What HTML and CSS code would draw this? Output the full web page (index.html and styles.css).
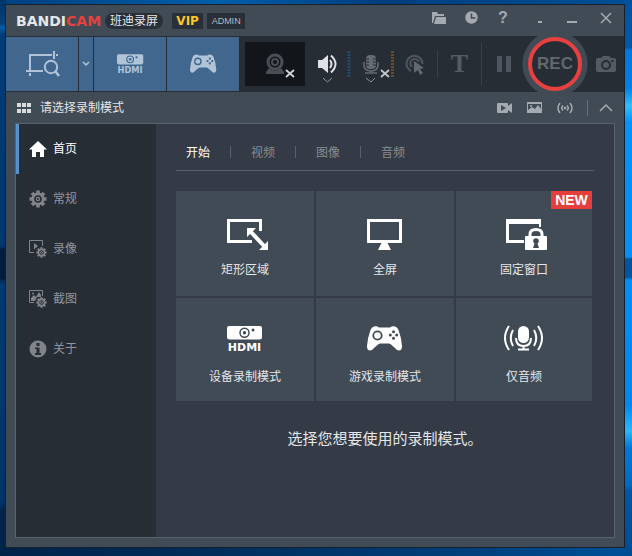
FILE: index.html
```html
<!DOCTYPE html>
<html lang="zh-CN">
<head>
<meta charset="utf-8">
<meta name="viewport" content="width=device-width, initial-scale=1">
<title>BANDICAM</title>
<link rel="stylesheet" href="styles.css">
</head>
<body>
<svg class="defs" aria-hidden="true">
  <symbol id="hdmi" viewBox="0 0 36 26">
    <path fill="currentColor" fill-rule="evenodd" d="M2 0H33Q35 0 35 2V11Q35 13.500 32.500 13.500H2.500Q0 13.500 0 11V2Q0 0 2 0Z"/>
    <circle class="hole-line" cx="17.500" cy="6.800" r="4.500" stroke-width="1.500"/>
    <circle class="hole" cx="17.500" cy="6.800" r="1.700"/>
    <circle class="hole" cx="26" cy="4" r="1.500"/>
    <text class="hdmi-text" x="17.500" y="25" text-anchor="middle">HDMI</text>
  </symbol>
  <symbol id="pad" viewBox="0 0 36 26">
    <path fill="currentColor" d="M7 .5Q10-.5 12 1.500H23Q25-.5 28 .5Q30.500 1 31.500 4Q34.500 12 35 20Q35 24.500 32 24.500Q30 24.500 28 22L24 18.500Q23 17.500 21.500 17.500H13.500Q12 17.500 11 18.500L7 22Q5 24.500 3 24.500Q0 24.500 0 20Q.5 12 3.500 4Q4.500 1 7 .5Z"/>
    <circle class="hole-line" cx="10.500" cy="9.500" r="4.200" stroke-width="1.800"/>
    <circle class="hole" cx="26.500" cy="5.800" r="1.500"/><circle class="hole" cx="26.500" cy="12.200" r="1.500"/>
    <circle class="hole" cx="23.300" cy="9" r="1.500"/><circle class="hole" cx="29.700" cy="9" r="1.500"/>
  </symbol>
  <symbol id="gear" viewBox="0 0 18 18">
    <g stroke="currentColor" stroke-width="3.600">
      <path d="M9 .5V17.500M.5 9H17.500M3 3L15 15M15 3L3 15"/>
    </g>
    <circle cx="9" cy="9" r="6.500" fill="currentColor"/>
    <circle class="hole-line" cx="9" cy="9" r="3" stroke-width="1.600"/>
    <circle class="hole" cx="9" cy="9" r="1"/>
  </symbol>
</svg>

<main class="window">
  <header class="titlebar">
    <div class="logo"><span>BANDI</span><span class="logo-red">CAM</span></div>
    <span class="pill">班迪录屏</span>
    <span class="badge vip">VIP</span>
    <span class="badge admin">ADMIN</span>
    <div class="window-tools">
      <button class="tool" aria-label="打开文件夹"><svg width="14" height="12"><path fill="currentColor" d="M0 0H5L6 2H12V4H3L1 11H0ZM4 5H14V12H2Z"/></svg></button>
      <button class="tool" aria-label="计划"><svg width="13" height="13"><circle cx="6.500" cy="6.500" r="6.200" fill="currentColor"/><path d="M6.500 2.500V7H10.500" class="hole-line" stroke-width="1.600"/></svg></button>
      <button class="tool help" aria-label="帮助">?</button>
      <span class="tool-gap"></span>
      <button class="tool" aria-label="最小化到托盘"><svg width="12" height="12"><path fill="currentColor" d="M4 9H8V11H4Z"/></svg></button>
      <button class="tool" aria-label="最小化"><svg width="12" height="12"><path fill="currentColor" d="M1 9H11V11H1Z"/></svg></button>
      <button class="tool close" aria-label="关闭"><svg width="12" height="12"><path d="M1 1L11 11M11 1L1 11" fill="none" stroke="currentColor" stroke-width="1.500"/></svg></button>
    </div>
  </header>

  <div class="toolbar">
    <div class="modes">
      <button class="mode" aria-label="矩形区域"><svg width="36" height="28" fill="none" stroke="currentColor" stroke-width="2"><path d="M5 5H28M32 5H34M6 4V20M2 21H19M6 23V26M30 1V9"/><circle cx="27" cy="17" r="6.200"/><path d="M31.500 21.500L35 26" stroke-width="2.500"/></svg></button>
      <button class="mode-more" aria-label="更多模式"><svg width="8" height="6"><path d="M1 1L4 4L7 1" fill="none" stroke="currentColor" stroke-width="1.500"/></svg></button>
      <button class="mode" aria-label="设备录制模式"><svg width="27" height="20"><use href="#hdmi"/></svg></button>
      <button class="mode" aria-label="游戏录制模式"><svg width="27" height="20"><use href="#pad"/></svg></button>
    </div>
    <button class="webcam" aria-label="摄像头"><svg width="60" height="44">
      <g fill="none" stroke="#4b4f55"><circle cx="30" cy="20" r="7" stroke-width="3"/><circle cx="30" cy="20" r="3" stroke-width="2"/></g><path fill="#4b4f55" d="M24 26Q30 31 36 26L39 30V32H21V30Z"/>
      <path d="M41 28L49 35M49 28L41 35" stroke="#d3d6d9" stroke-width="1.800"/></svg></button>
    <button class="device" aria-label="扬声器"><svg width="46" height="54">
      <path fill="#dfe2e4" d="M13 23H17L23 18V36L17 31H13Z"/><g fill="none" stroke="#dfe2e4" stroke-width="2"><path d="M25 23Q28 27 25 31"/><path d="M26 18.500Q35 27 26 35.500"/></g><path d="M18 41L22.500 45L27 41" fill="none" stroke="#8d949c"/>
      <path d="M44 14V41" stroke="#24476c" stroke-width="3" stroke-dasharray="2 1"/></svg></button>
    <button class="device" aria-label="麦克风"><svg width="46" height="54">
      <rect x="15" y="18" width="10" height="14" rx="4" fill="#666b72"/><path d="M15 22H18M15 25H18M15 28H18M22 22H25M22 25H25M22 28H25" stroke="#292f37"/><path d="M13 25V28Q13 34 20 34Q27 34 27 28V25M20 34V36M14 36H26" fill="none" stroke="#666b72" stroke-width="1.600"/><path d="M15 41L20 45L24 41" fill="none" stroke="#8d949c"/>
      <path d="M30 33L38 40M38 33L30 40" stroke="#c3c7cb" stroke-width="1.800"/>
      <path d="M41.500 14V41" stroke="#714a25" stroke-width="3" stroke-dasharray="2 1"/></svg></button>
    <button class="device" aria-label="鼠标效果"><svg width="40" height="54">
      <g fill="none" stroke="#4f555e" stroke-width="2"><path d="M14 34A8 8 0 1 1 25.500 27"/><path d="M15 30A4.500 4.500 0 1 1 22 25"/></g><path fill="#626870" d="M17 24L27 31L23 32L26 36L23 38L21 33L17 36Z"/></svg></button>
    <span class="divider"></span>
    <button class="text-tool" aria-label="文字">T</button>
    <span class="divider tall"></span>
    <button class="device pause" aria-label="暂停"><svg width="14" height="16"><path fill="currentColor" d="M0 0H5V16H0ZM9 0H14V16H9Z"/></svg></button>
    <button class="rec"><span>REC</span></button>
    <button class="device camera" aria-label="截图"><svg width="20" height="16"><path fill="currentColor" d="M2 2H5L7 0H13L15 2H18Q20 2 20 4V14Q20 16 18 16H2Q0 16 0 14V4Q0 2 2 2Z"/><circle class="hole-line" cx="10" cy="9" r="4" stroke-width="2"/><circle class="hole" cx="16.500" cy="5" r="1.200"/></svg></button>
  </div>

  <div class="subheader">
    <svg width="14" height="10" fill="#d9dcdf"><path d="M0 0H4V4H0ZM5 0H9V4H5ZM10 0H14V4H10ZM0 6H4V10H0ZM5 6H9V10H5ZM10 6H14V10H10Z"/></svg>
    <h1>请选择录制模式</h1>
    <div class="quick">
      <button aria-label="视频文件"><svg width="16" height="12"><path fill="currentColor" d="M1 1H10Q11 1 11 2V4L15 1V11L11 8V10Q11 11 10 11H1Q0 11 0 10V2Q0 1 1 1Z"/><path class="hole" d="M4 3L9 6L4 9Z"/></svg></button>
      <button aria-label="图像文件"><svg width="16" height="12"><path fill="currentColor" d="M0 0H15V11H0Z"/><path class="hole" d="M1 2H14V7L11 3L8 7L5 5L1 8Z"/><circle cx="4" cy="4" r="1" fill="currentColor"/></svg></button>
      <button aria-label="音频文件"><svg width="16" height="12" fill="none" stroke="currentColor" stroke-width="1.500"><path d="M3 1Q-1 6 3 11M6 3.500Q3.500 6 6 8.500M10 3.500Q12.500 6 10 8.500M13 1Q17 6 13 11"/><circle cx="8" cy="6" r="1.300" fill="currentColor" stroke="none"/></svg></button>
      <span class="quick-divider"></span>
      <button aria-label="收起"><svg width="14" height="8"><path d="M1 7L7 1L13 7" fill="none" stroke="currentColor" stroke-width="1.500"/></svg></button>
    </div>
  </div>

  <div class="panel">
    <nav class="sidebar">
      <a href="#" class="active"><svg width="18" height="18"><path fill="currentColor" d="M9 1L18 9.500H15V17H11V12H7V17H3V9.500H0Z"/></svg>首页</a>
      <a href="#"><svg width="18" height="18"><use href="#gear"/></svg>常规</a>
      <a href="#"><svg width="18" height="18"><path d="M5 12.500H.5V.5H13.500V6" fill="none" stroke="currentColor"/><path fill="currentColor" d="M5 3L9 6L5 9.500Z"/><use href="#gear" x="7" y="7" width="11" height="11"/></svg>录像</a>
      <a href="#"><svg width="18" height="18"><path d="M5 12.500H.5V.5H13.500V6" fill="none" stroke="currentColor"/><path fill="currentColor" d="M2 11V8L5 5L7 7L10 2L12 5V7H8L6 11Z"/><circle cx="4" cy="3.500" r="1" fill="currentColor"/><use href="#gear" x="7" y="7" width="11" height="11"/></svg>截图</a>
      <a href="#"><svg width="18" height="18"><circle cx="9" cy="9" r="8.500" fill="currentColor"/><path class="hole" d="M7.500 3H10.500V6H7.500ZM6 7.500H10.500V13H12V15H6V13H7.500V9H6Z"/></svg>关于</a>
    </nav>
    <section class="content">
      <div class="tabs" role="tablist">
        <button role="tab" aria-selected="true">开始</button>
        <button role="tab" aria-selected="false">视频</button>
        <button role="tab" aria-selected="false">图像</button>
        <button role="tab" aria-selected="false">音频</button>
      </div>
      <div class="cards">
        <button class="card"><svg width="48" height="36"><path d="M31 25.500H7.500V4.500H39.500V15" fill="none" stroke="currentColor" stroke-width="3"/><path d="M29 15L44 31" class="halo"/><path d="M29 15L44 31" stroke="currentColor" stroke-width="4"/><path fill="currentColor" d="M26 12H35L26 21ZM47 34H38L47 25Z"/></svg>矩形区域</button>
        <button class="card"><svg width="48" height="36"><path d="M7.500 4.500H39.500V25.500H7.500Z" fill="none" stroke="currentColor" stroke-width="3"/><path fill="currentColor" d="M21 26H26L30 34H17Z"/></svg>全屏</button>
        <button class="card"><svg width="48" height="36"><path fill="currentColor" d="M6 3H41V11H39V8H9V24H24V27H6Z"/><path d="M30 22V18Q30 13.500 36 13.500Q42 13.500 42 18V22" fill="none" stroke="currentColor" stroke-width="3"/><rect x="25" y="20" width="22" height="14" rx="1" fill="currentColor"/><circle class="hole" cx="36" cy="25" r="2.800"/><path class="hole" d="M35 26H37L39 32H33Z"/></svg>固定窗口<span class="new">NEW</span></button>
        <button class="card"><svg width="48" height="36"><use href="#hdmi" x="6" y="3" width="36" height="26"/></svg>设备录制模式</button>
        <button class="card"><svg width="48" height="36"><use href="#pad" x="6" y="3" width="36" height="26"/></svg>游戏录制模式</button>
        <button class="card"><svg width="48" height="36" fill="none" stroke="currentColor"><rect x="18" y="3" width="11" height="17" rx="5.500" fill="currentColor" stroke="none"/><path d="M16 15Q16 23 23.500 23Q31 23 31 15M23.500 23V26M18 26.500H29" stroke-width="2"/><path d="M9 3Q1 15 9 27M13 7Q8.500 15 13 23M38 3Q46 15 38 27M34 7Q38.500 15 34 23" stroke-width="2"/></svg>仅音频</button>
      </div>
      <p class="hint">选择您想要使用的录制模式。</p>
    </section>
  </div>
</main>
</body>
</html>
```
FILE: styles.css
```css
* { box-sizing: border-box; }

body {
  margin: 0;
  min-height: 100vh;
  display: flex;
  padding: 4px 7px 8px 5px;
  font: 12px/20px "Liberation Sans", "Noto Sans CJK SC", sans-serif;
  color: #e4e6e8;
  background:
    linear-gradient(#0052a0 0, #0058a8 48px, #0078dc 50px, #0080e8 88px, #30c0ff 106px, #0094fa 122px, #0090f8 257px, #0054a0 259px, #0054a0 277px, #0090f8 280px, #0088f0 405px, #28b8ff 431px, #0078d8 448px, #0068c0 486px, #0056a4 490px, #004c92 556px) right / 8px 100% no-repeat,
    linear-gradient(#00356a 0, #00407a 24px, #0060a8 27px, #003c78 35px, #00386f 246px, #001c3c 250px, #001c3c 278px, #003a70 284px, #003468 500px, #002448 512px, #002448 556px) left / 6px 100% no-repeat,
    linear-gradient(90deg, #004080, #005eaa 35%, #003f80 60%, #004f94) top / 100% 5px no-repeat,
    linear-gradient(90deg, #00234a, #002c58 30%, #00407c 75%, #005098);
}

button {
  margin: 0;
  padding: 0;
  border: 0;
  background: none;
  color: inherit;
  font: inherit;
  display: flex;
  align-items: center;
  justify-content: center;
}

svg { display: block; flex: none; overflow: visible; }
.defs { position: absolute; width: 0; height: 0; }
.hole { fill: var(--hole); }
.hole-line { fill: none; stroke: var(--hole); }
.hdmi-text { font: bold 11px "DejaVu Sans", sans-serif; fill: currentColor; }

.window {
  --hole: #414b56;
  flex: 1;
  display: flex;
  flex-direction: column;
  border: 1px solid #16202c;
  background: #414b56;
}

.titlebar { display: flex; align-items: center; height: 31px; padding-left: 10px; }
.logo { display: flex; font: bold 14px/20px "DejaVu Sans", sans-serif; }
.logo-red { color: #e5413f; }
.pill { margin-left: 4px; padding: 0 5px; border-radius: 8px; line-height: 16px; background: #292f38; }
.badge { height: 16px; line-height: 16px; background: #292f38; text-align: center; }
.vip { width: 31px; margin-left: 9px; font: bold 12px/16px "DejaVu Sans", sans-serif; color: #ffc528; }
.admin { width: 38px; margin-left: 4px; font-size: 9px; color: #b5babf; }
.window-tools { display: flex; margin-left: auto; padding-bottom: 6px; color: #a5aab1; }
.tool { width: 32px; height: 24px; }
.help { font: bold 16px/24px "Liberation Sans", sans-serif; }
.tool-gap { width: 5px; }
.close { width: 36px; }

.toolbar { --hole: #272d35; display: flex; align-items: center; height: 56px; background: #272d35; }
.modes { display: flex; gap: 1px; }
.mode, .mode-more { --hole: #41678f; height: 54px; background: #41678f; color: #b0c3d7; }
.mode { width: 72px; }
.mode-more { width: 14px; }
.webcam { width: 60px; height: 44px; margin-left: 6px; background: #12161b; }
.divider { width: 1px; height: 28px; background: #383f49; }
.divider.tall { height: 42px; }
.text-tool { width: 43px; font: bold 26px/30px "Liberation Serif", serif; color: #555b64; }
.pause { flex: 1; padding-left: 4px; color: #4f555e; }
.rec {
  width: 66px;
  height: 56px;
  background: radial-gradient(circle, #414b56 32px, transparent 33px);
  font: bold 17px/20px "Liberation Sans", sans-serif;
  color: #626770;
}
.rec span {
  display: flex;
  align-items: center;
  justify-content: center;
  width: 54px;
  height: 54px;
  border: 4px solid #e8403f;
  border-radius: 50%;
  background: #272d35;
}
.camera { width: 36px; color: #555b64; }

.subheader { display: flex; align-items: center; gap: 9px; height: 31px; padding: 0 11px; }
.subheader h1 { margin: 0; font-size: 12px; font-weight: 400; }
.quick { display: flex; align-items: center; gap: 14px; margin-left: auto; color: #a5aab1; }
.quick-divider { width: 1px; height: 16px; background: #68707a; }
.quick button:last-child { width: 14px; margin-left: -3px; }

.panel { flex: 1; display: flex; margin: 0 9px 9px; border: 1px solid #59626d; background: #353b46; }
.sidebar { --hole: #272d35; width: 140px; background: #272d35; }
.sidebar a {
  display: flex;
  align-items: center;
  gap: 6px;
  height: 50px;
  padding-left: 10px;
  border-left: 3px solid transparent;
  color: #92969c;
  text-decoration: none;
}
.sidebar svg { color: #81858a; }
.sidebar .active { border-color: #5592cd; }
.sidebar .active, .sidebar .active svg { color: #fff; }

.content { flex: 1; padding: 19px 20px; }
.tabs { display: flex; height: 28px; border-bottom: 1px solid #59606b; }
.tabs button { position: relative; width: 65px; height: 20px; padding-right: 21px; color: #868b93; }
.tabs button:first-child { color: #fff; }
.tabs button + button::before { content: ""; position: absolute; left: -11px; top: 3px; width: 1px; height: 12px; background: #59606b; }
.cards { display: grid; grid-template-columns: 138fr 138fr 136fr; grid-template-rows: 105px 103px; gap: 2px; margin: 20px 2px 0 0; }
.card {
  position: relative;
  flex-direction: column;
  justify-content: flex-start;
  gap: 8px;
  padding-top: 25px;
  background: #414b56;
}
.card svg { color: #fff; }
.halo { stroke: #414b56; stroke-width: 7; }
.new {
  position: absolute;
  top: 0;
  right: 0;
  width: 41px;
  height: 18px;
  background: #e63d3d;
  color: #fff;
  font: bold 14px/18px "Liberation Sans", sans-serif;
}
.hint { margin: 28px 0 0; font-size: 15px; text-align: center; }
```
